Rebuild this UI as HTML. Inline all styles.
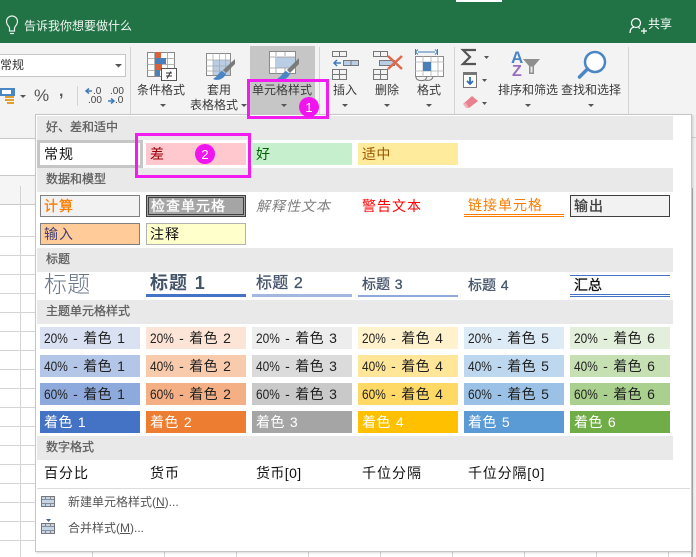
<!DOCTYPE html>
<html lang="zh"><head><meta charset="utf-8"><style>
html,body{margin:0;padding:0}
body{width:696px;height:557px;overflow:hidden;position:relative;background:#fff;font-family:"Liberation Sans","Noto Sans CJK SC",sans-serif;color:#222}
.a{position:absolute;white-space:nowrap}
.l{position:absolute;white-space:nowrap;font-size:12px;line-height:16px;color:#3a3a3a;text-align:center;transform:translateX(-50%)}
.b{position:absolute;left:37px;width:636px;height:24px;background:#e9e9e9;color:#5f5f5f;font-size:12px;line-height:23px;padding-left:9px;box-sizing:border-box;-webkit-text-stroke:.3px #5f5f5f}
.c{position:absolute;width:100px;height:22px;box-sizing:border-box;padding-left:4px;font-size:14px;line-height:22px;letter-spacing:.4px;word-spacing:.8px;white-space:nowrap;color:#222}
.c span{display:inline-block;width:24px;letter-spacing:0;transform:scaleX(.85);transform-origin:0 50%}
.x{letter-spacing:1px}
.m{-webkit-text-stroke:.3px currentColor}
svg{position:absolute;left:0;top:0}
</style></head><body>
<!-- sheet background -->
<svg width="696" height="557" viewBox="0 0 696 557">
<rect x="0" y="115" width="36" height="23" fill="#f3f3f3"/>
<rect x="0" y="138" width="36" height="1" fill="#c8c8c8"/>
<rect x="0" y="175" width="36" height="29" fill="#f5f5f5"/>
<rect x="0" y="175" width="36" height="1" fill="#c8c8c8"/>
<rect x="0" y="204" width="36" height="1" fill="#c8c8c8"/>
<rect x="20" y="186" width="1" height="371" fill="#d4d4d4"/>
<g fill="#d4d4d4">
<rect x="0" y="236" width="36" height="1"/><rect x="0" y="255" width="36" height="1"/><rect x="0" y="274" width="36" height="1"/><rect x="0" y="293" width="36" height="1"/><rect x="0" y="312" width="36" height="1"/><rect x="0" y="331" width="36" height="1"/><rect x="0" y="350" width="36" height="1"/><rect x="0" y="369" width="36" height="1"/><rect x="0" y="388" width="36" height="1"/><rect x="0" y="407" width="36" height="1"/><rect x="0" y="426" width="36" height="1"/><rect x="0" y="445" width="36" height="1"/><rect x="0" y="464" width="36" height="1"/><rect x="0" y="483" width="36" height="1"/><rect x="0" y="502" width="36" height="1"/><rect x="0" y="521" width="36" height="1"/><rect x="0" y="540" width="36" height="1"/>
<rect x="92" y="551" width="1" height="6"/><rect x="164" y="551" width="1" height="6"/><rect x="236" y="551" width="1" height="6"/><rect x="308" y="551" width="1" height="6"/><rect x="380" y="551" width="1" height="6"/><rect x="452" y="551" width="1" height="6"/><rect x="524" y="551" width="1" height="6"/><rect x="596" y="551" width="1" height="6"/><rect x="668" y="551" width="1" height="6"/>
</g>
<rect x="692" y="115" width="4" height="442" fill="#f0f0f0"/>
<rect x="692" y="137" width="4" height="1" fill="#d0d0d0"/>
<rect x="691" y="188" width="2" height="369" fill="#b4b4b4"/>
</svg>
<!-- title bar -->
<div class="a" style="left:0;top:0;width:696px;height:43px;background:#217346"></div>
<div class="a" style="left:456px;top:0;width:46px;height:2px;background:#fff"></div>
<div class="a" style="left:24px;top:18px;color:#f0f6f2;font-size:12px;line-height:17px">告诉我你想要做什么</div>
<div class="a" style="left:648px;top:16px;color:#fff;font-size:12px;line-height:17px">共享</div>
<!-- ribbon -->
<div class="a" style="left:0;top:43px;width:696px;height:72px;background:#f3f3f3"></div>
<div class="a" style="left:250px;top:46px;width:65px;height:69px;background:#c6c6c6"></div>
<div class="a" style="left:-10px;top:54px;width:136px;height:23px;background:#fff;border:1px solid #c6c6c6;box-sizing:border-box;font-size:12px;line-height:21px;padding-left:9px;color:#333">常规</div>
<div class="l" style="left:161px;top:82px">条件格式</div>
<div class="l" style="left:219px;top:82px">套用</div>
<div class="l" style="left:214px;top:97px">表格格式</div>
<div class="l" style="left:282px;top:82px">单元格样式</div>
<div class="l" style="left:345px;top:82px">插入</div>
<div class="l" style="left:387px;top:82px">删除</div>
<div class="l" style="left:429px;top:82px">格式</div>
<div class="l" style="left:528px;top:82px">排序和筛选</div>
<div class="l" style="left:591px;top:82px">查找和选择</div>
<div class="a" style="left:34px;top:87px;font-size:17px;line-height:18px;color:#555">%</div>
<div class="a" style="left:59px;top:83px;font-size:16px;font-weight:700;line-height:18px;color:#555">,</div>
<div class="a" style="left:93px;top:87px;font-size:10px;line-height:10px;color:#444">.0</div>
<div class="a" style="left:88px;top:96px;font-size:10px;line-height:10px;color:#444">.00</div>
<div class="a" style="left:110px;top:87px;font-size:10px;line-height:10px;color:#444">.00</div>
<div class="a" style="left:115px;top:96px;font-size:10px;line-height:10px;color:#444">.0</div>
<svg width="696" height="116" viewBox="0 0 696 116">
<!-- bulb -->
<g fill="none" stroke="#e6f0ea" stroke-width="1.2"><path d="M9.5 31v-3c0-1.500-3-3-3-6.500a5.500 5.500 0 0 1 11 0c0 3.500-3 5-3 6.500v3z"/><path d="M10 33.500h4"/></g>
<!-- person -->
<g fill="none" stroke="#fff" stroke-width="1.200"><circle cx="636" cy="23" r="4.500"/><path d="M630 33c0-4 2-5.500 4-6M638.500 27.500l1.500 1"/><path d="M641 31h6M644 28v6"/></g>
<!-- separators -->
<g fill="#d4d4d4"><rect x="130" y="47" width="1" height="68"/><rect x="319" y="47" width="1" height="68"/><rect x="454" y="47" width="1" height="68"/><rect x="628" y="47" width="1" height="68"/><rect x="77" y="86" width="1" height="20"/></g>
<!-- dropdown arrows -->
<g fill="#555"><path d="M115 64h7l-3.500 3.500z"/><path d="M20 95h6l-3 3z"/><path d="M160 104h6l-3 3z"/><path d="M241 104h6l-3 3z"/><path d="M281 104h6l-3 3z"/><path d="M342 104h6l-3 3z"/><path d="M384 104h6l-3 3z"/><path d="M426 104h6l-3 3z"/><path d="M525 104h6l-3 3z"/><path d="M588 104h6l-3 3z"/><path d="M484 56h5l-2.500 3z"/><path d="M482 79h5l-2.500 3z"/><path d="M482 102h5l-2.500 3z"/></g>
<!-- currency -->
<rect x="0" y="88" width="15" height="8" fill="#4a86c5"/><rect x="2" y="90" width="9" height="4" fill="#fff"/><rect x="5" y="96" width="9" height="2" fill="#e0a030"/><rect x="5" y="99" width="9" height="2" fill="#e0a030"/><rect x="7" y="102" width="7" height="2" fill="#e0a030"/>
<!-- decimal arrows -->
<path d="M92 91h-6M89 88.500l-3 2.500 3 2.500" fill="none" stroke="#3f7cbb" stroke-width="1.500"/>
<path d="M108 101h6M111 98.500l3 2.500-3 2.500" fill="none" stroke="#3f7cbb" stroke-width="1.500"/>
<!-- conditional -->
<g>
<rect x="147.500" y="52.500" width="27" height="24" fill="#fff" stroke="#8a8a8a"/>
<path d="M147 58.500h28M147 64.500h28M147 70.500h28M154.500 52v24M167.500 52v24" stroke="#a0a0a0" fill="none" stroke-width=".8"/>
<rect x="155" y="52" width="6" height="6" fill="#d9623d"/><rect x="155" y="58" width="11" height="6" fill="#4a7fba"/><rect x="155" y="64" width="7" height="6" fill="#d9623d"/><rect x="155" y="70" width="5" height="6" fill="#4a7fba"/>
<rect x="161.500" y="68.500" width="15" height="12" fill="#fff" stroke="#555"/>
<path d="M166 73h6M166 76h6M171 71.500l-4 7" stroke="#333" fill="none"/>
</g>
<!-- table format -->
<g>
<rect x="206.500" y="53.500" width="24" height="22" fill="#fff" stroke="#8a8a8a"/>
<rect x="213" y="60" width="17" height="15" fill="#b9cde4"/>
<path d="M206 60h25M206 66h25M206 71h25M213 53v22M219.500 53v22M225.500 53v22" stroke="#a8a8a8" fill="none" stroke-width=".7"/>
<path d="M235 59l-12 11 3 3 9-9z" fill="#7b7b7b"/>
<path d="M222 71c-3 1-3 4-9 8 4 2 10 1 13-5z" fill="#4a86c5"/>
</g>
<!-- cell styles -->
<g>
<rect x="269.500" y="51.500" width="26" height="22" fill="#fff" stroke="#8a8a8a"/>
<rect x="275" y="57" width="20" height="11" fill="#b9cde4"/>
<path d="M269 57h27M269 68h27M276 52v4M285 52v4M276 68v5M285 68v5" stroke="#9a9a9a" fill="none" stroke-width=".8"/>
<path d="M299 58l-12 12 3 3 9-9z" fill="#7b7b7b"/>
<path d="M286 71c-3 1-3 4-9 8 4 2 10 1 13-5z" fill="#4a86c5"/>
</g>
<!-- insert -->
<g fill="none" stroke="#777">
<rect x="332.500" y="51.500" width="14" height="5"/><path d="M339.500 51v6"/>
<rect x="343.500" y="60.500" width="15" height="5" fill="#b9cde4"/><path d="M351 60v6"/>
<rect x="332.500" y="69.500" width="14" height="10"/><path d="M332 74.500h15M339.500 69v11"/>
<path d="M341 63h-7M337 60l-3 3 3 3" stroke="#3f7cbb" stroke-width="1.500"/>
</g>
<!-- delete -->
<g fill="none" stroke="#777">
<rect x="373.500" y="51.500" width="14" height="5"/><path d="M380.500 51v6"/>
<rect x="379.500" y="60.500" width="15" height="5" fill="#b9cde4"/>
<rect x="373.500" y="69.500" width="14" height="10"/><path d="M373 74.500h15M380.500 69v11"/>
<path d="M388 69l14-13M388 56l14 13" stroke="#dd6b4a" stroke-width="2.500"/>
</g>
<!-- format -->
<g fill="none">
<path d="M415.500 49v6M437.500 49v6M418 52h17" stroke="#3f7cbb"/>
<path d="M418 49.500l-2.500 2.500 2.500 2.500M435 49.500l2.500 2.500-2.500 2.500" stroke="#3f7cbb"/>
<rect x="415.500" y="56.500" width="28" height="20" fill="#fff" stroke="#8a8a8a"/>
<path d="M415 62h29M415 71h29M423 56v21M431 56v21M438 56v21" stroke="#b0b0b0" stroke-width=".8"/>
<rect x="423" y="62" width="8" height="9" fill="#4a7fba"/>
<path d="M416 77c0 4 6 4 9 3l2-3M425 80c4 1 7 0 8-3" stroke="#777"/>
</g>
<!-- sigma -->
<path d="M476 50h-13l7 7-7 7h13" fill="none" stroke="#555" stroke-width="2.200"/>
<!-- fill -->
<rect x="463.500" y="72.500" width="13" height="15" fill="#fff" stroke="#777"/><rect x="463" y="72" width="14" height="3" fill="#777"/>
<path d="M470 77v7M467 81l3 3 3-3" fill="none" stroke="#2f6fb5" stroke-width="1.800"/>
<!-- eraser -->
<path d="M463 104l9-8 6 5-9 7z" fill="#e9808f"/><path d="M463 104l3 4h3l-3-5z" fill="#f1b0ba"/>
<!-- funnel -->
<path d="M523 59h17l-6 7v8h-5v-8z" fill="#8f8f8f"/><path d="M530.500 66.500h2v6h-2z" fill="#e8e8e8"/>
<!-- magnifier -->
<circle cx="595" cy="62" r="10" fill="#fff" stroke="#4a86c5" stroke-width="2.500"/>
<path d="M587.500 69l-8 8" stroke="#4a86c5" stroke-width="3.500" stroke-linecap="round"/>
</svg>
<div class="a" style="left:511px;top:48px;font-size:17px;font-weight:700;line-height:19px;color:#4a86c5">A</div>
<div class="a" style="left:512px;top:63px;font-size:16px;font-weight:700;line-height:18px;color:#9a6cbd">Z</div>
<!-- menu -->
<div class="a" style="left:35px;top:114px;width:657px;height:438px;background:#fff;border:1px solid #c6c6c6;box-sizing:border-box;box-shadow:1px 1px 2px rgba(0,0,0,.15)"></div>
<div class="b" style="top:116px">好、差和适中</div>
<div class="b" style="top:168px">数据和模型</div>
<div class="b" style="top:248px">标题</div>
<div class="b" style="top:300px">主题单元格样式</div>
<div class="b" style="top:436px">数字格式</div>
<!-- row 1 -->
<div class="a" style="left:37px;top:140px;width:106px;height:28px;border:3px solid #c6c6c6;box-sizing:border-box"></div>
<div class="c x" style="left:40px;top:143px;color:#111">常规</div>
<div class="c" style="left:146px;top:143px;background:#ffc7ce;color:#9c0006">差</div>
<div class="c" style="left:252px;top:143px;background:#c6efce;color:#006100">好</div>
<div class="c" style="left:358px;top:143px;background:#ffeb9c;color:#9c5700">适中</div>
<!-- data and model -->
<div class="c x m" style="left:40px;top:195px;background:#f2f2f2;border:1px solid #7f7f7f;color:#fa7d00;line-height:20px;padding-left:3px">计算</div>
<div class="c x m" style="left:146px;top:195px;background:#a5a5a5;border:3px double #3f3f3f;color:#fff;line-height:16px;padding-left:2px">检查单元格</div>
<div class="c x" style="left:252px;top:195px;color:#7f7f7f;font-style:italic">解释性文本</div>
<div class="c x" style="left:358px;top:195px;color:#ff0000">警告文本</div>
<div class="c x" style="left:464px;top:195px;color:#fa7d00;border-bottom:3px double #fa7d00;line-height:21px">链接单元格</div>
<div class="c x m" style="left:570px;top:195px;background:#f2f2f2;border:1px solid #3f3f3f;color:#3f3f3f;line-height:20px;padding-left:3px">输出</div>
<div class="c x" style="left:40px;top:223px;background:#ffcc99;border:1px solid #7f7f7f;color:#3f3f76;line-height:20px;padding-left:3px">输入</div>
<div class="c x" style="left:146px;top:223px;background:#ffffcc;border:1px solid #b2b2b2;color:#111;line-height:20px;padding-left:3px">注释</div>
<!-- titles -->
<div class="c" style="left:40px;top:272px;height:25px;color:#6a7789;font-size:23px;font-weight:300;line-height:25px;letter-spacing:.2px">标题</div>
<div class="c" style="left:146px;top:272px;height:25px;color:#44546a;font-size:18px;font-weight:700;line-height:22px;border-bottom:3px solid #4472c4;letter-spacing:1px">标题 1</div>
<div class="c m" style="left:252px;top:272px;height:25px;color:#44546a;font-size:16px;line-height:23px;border-bottom:3px solid #a2b8e1;letter-spacing:.2px">标题 2</div>
<div class="c m" style="left:358px;top:272px;height:25px;color:#44546a;font-size:14px;line-height:24px;border-bottom:2px solid #8ea9db;letter-spacing:0">标题 3</div>
<div class="c m" style="left:464px;top:272px;height:25px;color:#44546a;font-size:14px;line-height:26px;letter-spacing:0">标题 4</div>
<div class="c m" style="left:570px;top:275px;height:22px;color:#111;border-top:1px solid #4472c4;border-bottom:3px double #4472c4;line-height:18px;letter-spacing:0">汇总</div>
<!-- 20% -->
<div class="c" style="left:40px;top:327px;background:#d9e1f2"><span>20%</span> - 着色 1</div>
<div class="c" style="left:146px;top:327px;background:#fce4d6"><span>20%</span> - 着色 2</div>
<div class="c" style="left:252px;top:327px;background:#ededed"><span>20%</span> - 着色 3</div>
<div class="c" style="left:358px;top:327px;background:#fff2cc"><span>20%</span> - 着色 4</div>
<div class="c" style="left:464px;top:327px;background:#ddebf7"><span>20%</span> - 着色 5</div>
<div class="c" style="left:570px;top:327px;background:#e2efda"><span>20%</span> - 着色 6</div>
<!-- 40% -->
<div class="c" style="left:40px;top:355px;background:#b4c6e7"><span>40%</span> - 着色 1</div>
<div class="c" style="left:146px;top:355px;background:#f8cbad"><span>40%</span> - 着色 2</div>
<div class="c" style="left:252px;top:355px;background:#dbdbdb"><span>40%</span> - 着色 3</div>
<div class="c" style="left:358px;top:355px;background:#ffe699"><span>40%</span> - 着色 4</div>
<div class="c" style="left:464px;top:355px;background:#bdd7ee"><span>40%</span> - 着色 5</div>
<div class="c" style="left:570px;top:355px;background:#c6e0b4"><span>40%</span> - 着色 6</div>
<!-- 60% -->
<div class="c" style="left:40px;top:383px;background:#8ea9db"><span>60%</span> - 着色 1</div>
<div class="c" style="left:146px;top:383px;background:#f4b084"><span>60%</span> - 着色 2</div>
<div class="c" style="left:252px;top:383px;background:#c9c9c9"><span>60%</span> - 着色 3</div>
<div class="c" style="left:358px;top:383px;background:#ffd966"><span>60%</span> - 着色 4</div>
<div class="c" style="left:464px;top:383px;background:#9bc2e6"><span>60%</span> - 着色 5</div>
<div class="c" style="left:570px;top:383px;background:#a9d08e"><span>60%</span> - 着色 6</div>
<!-- accents -->
<div class="c" style="left:40px;top:411px;background:#4472c4;color:#fff">着色 1</div>
<div class="c" style="left:146px;top:411px;background:#ed7d31;color:#fff">着色 2</div>
<div class="c" style="left:252px;top:411px;background:#a5a5a5;color:#fff">着色 3</div>
<div class="c" style="left:358px;top:411px;background:#ffc000;color:#fff">着色 4</div>
<div class="c" style="left:464px;top:411px;background:#5b9bd5;color:#fff">着色 5</div>
<div class="c" style="left:570px;top:411px;background:#70ad47;color:#fff">着色 6</div>
<!-- numbers -->
<div class="c x" style="left:40px;top:462px;color:#111">百分比</div>
<div class="c x" style="left:146px;top:462px;color:#111">货币</div>
<div class="c" style="left:252px;top:462px;color:#111;letter-spacing:.4px">货币[0]</div>
<div class="c" style="left:358px;top:462px;color:#111;letter-spacing:1px">千位分隔</div>
<div class="c" style="left:464px;top:462px;color:#111;letter-spacing:.8px">千位分隔[0]</div>
<div class="a" style="left:37px;top:488px;width:653px;height:1px;background:#dcdcdc"></div>
<div class="a" style="left:68px;top:494px;font-size:12px;line-height:16px;color:#555">新建单元格样式(<u>N</u>)...</div>
<div class="a" style="left:68px;top:520px;font-size:12px;line-height:16px;color:#555">合并样式(<u>M</u>)...</div>
<svg width="696" height="557" viewBox="0 0 696 557">
<g fill="none" stroke="#777">
<rect x="41.500" y="496.500" width="13" height="10" fill="#c4d5ea"/><path d="M41 499.500h14M41 503.500h14M45.500 497v2M50.500 497v2M45.500 504v2M50.500 504v2" stroke-width=".8"/>
<rect x="41.500" y="523.500" width="13" height="10" fill="#c4d5ea"/><path d="M41 526.500h14M41 530.500h14M45.500 524v2M50.500 524v2M45.500 531v2M50.500 531v2" stroke-width=".8"/>
</g>
<path d="M46 519h5l-2.500 3z" fill="#44668e"/>
<!-- highlight rects -->
<rect x="248.500" y="80.500" width="79" height="37" fill="none" stroke="#f31cf0" stroke-width="3"/>
<rect x="136.500" y="134.500" width="113" height="42" fill="none" stroke="#f31cf0" stroke-width="3"/>
<circle cx="309" cy="107" r="10" fill="#f014ee"/>
<circle cx="205" cy="154" r="10" fill="#f014ee"/>
<text x="309" y="112" font-family="Liberation Sans" font-size="13" fill="#fff" text-anchor="middle">1</text>
<text x="205" y="159" font-family="Liberation Sans" font-size="13" fill="#fff" text-anchor="middle">2</text>
</svg>
</body></html>
